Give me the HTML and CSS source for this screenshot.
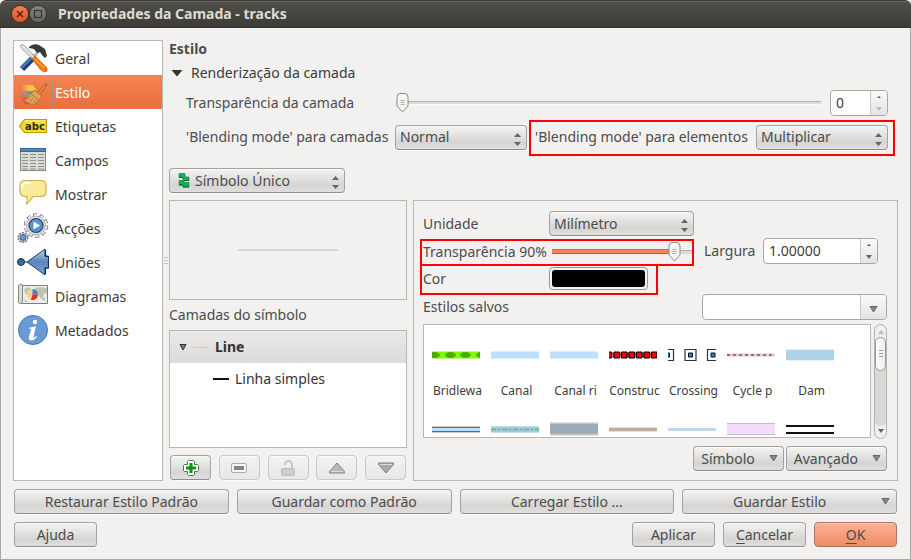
FILE: index.html
```html
<!DOCTYPE html>
<html lang="pt">
<head>
<meta charset="utf-8">
<title>Propriedades da Camada - tracks</title>
<link rel="stylesheet" href="styles.css">
</head>
<body>
<header class="titlebar">
  <button class="win close" aria-label="Fechar"><svg width="16" height="16" viewBox="0 0 16 16"><path d="M5 5l6 6M11 5l-6 6" stroke="#5a2312" stroke-width="1.500"/></svg></button>
  <button class="win max" aria-label="Maximizar"><svg width="16" height="16" viewBox="0 0 16 16"><rect x="4.500" y="4.500" width="7" height="7" fill="none" stroke="#34332e" stroke-width="1.200"/></svg></button>
  <h1>Propriedades da Camada - tracks</h1>
</header>
<main class="dialog">
  <div class="body">
    <nav class="sidebar">
      <a href="#geral"><svg class="ico" viewBox="0 0 32 32"><path d="M5 27L18 14" stroke="#1c3d70" stroke-width="6"/><path d="M4.500 26L14 16.500" stroke="#4479be" stroke-width="2.500"/><path d="M15 17l7-8" stroke="#b9bcbe" stroke-width="3"/><path d="M12 5c3-3 7-3.500 10-2l6 4 2 7-2 2-3-3-2-3-3 1-3-4-5-1z" fill="#34393b"/><path d="M3 4l2-2 4 3 10 11-2 2L6 8z" fill="#dfe1e2" stroke="#888c8e" stroke-width=".7"/><path d="M15 17l3-3 12 12v3l-3 1-4-3z" fill="#f57900" stroke="#c75a00" stroke-width=".7"/><path d="M18 17l9 9" stroke="#ffad4f" stroke-width="1.200"/></svg><span>Geral</span></a>
      <a href="#estilo" class="active"><svg class="ico" viewBox="0 0 32 32"><defs><linearGradient id="y"><stop offset="0" stop-color="#f6c745" stop-opacity="0"/><stop offset=".5" stop-color="#f6c745"/></linearGradient><linearGradient id="g"><stop offset="0" stop-color="#8e8fa5" stop-opacity=".1"/><stop offset=".5" stop-color="#8e8fa5"/></linearGradient><linearGradient id="r"><stop offset="0" stop-color="#f13b2e" stop-opacity="0"/><stop offset=".5" stop-color="#f13b2e"/></linearGradient></defs><path d="M4 9l12 0 4 6H6z" fill="url(#y)"/><path d="M3 15h13l4 6H5z" fill="url(#g)"/><path d="M2 20l12 2 6 6H8z" fill="url(#r)"/><path d="M20 17l8-9q2-1 2 1l-7 10z" fill="#e08a35" stroke="#a55b1b" stroke-width=".8"/><path d="M17 14l8 6-3 4-8-6z" fill="#e6a559" stroke="#a9641f" stroke-width=".8"/><path d="M13 17l9 7-4 4c-4 1-9-1-11-5 3 1 4-2 6-6z" fill="#dda15c" stroke="#b0702b" stroke-width=".7"/><path d="M13 20l-2 4M16 22l-3 4M19 24l-3 3" stroke="#ad742f" stroke-width=".7"/></svg><span>Estilo</span></a>
      <a href="#etiquetas"><svg class="ico" viewBox="0 0 32 32"><path d="M2.500 16L7.500 9.500h22v13h-22z" fill="#f4de2c" stroke="#b99c00" stroke-width="1.200"/><path d="M8 11h20" stroke="#fbf294"/><circle cx="6" cy="16" r="1" fill="#fff" stroke="#b99c00" stroke-width=".5"/><text class="tag" x="8" y="20">abc</text></svg><span>Etiquetas</span></a>
      <a href="#campos"><svg class="ico" viewBox="0 0 32 32"><rect x="3.500" y="4.500" width="25" height="22" fill="#d9ddd5" stroke="#888a85"/><rect x="3" y="4" width="26" height="4" fill="#3465a4"/><path d="M4 6h24" stroke="#7ca3d2"/><path d="M5 10.500h22M5 13.500h22M5 16.500h22M5 19.500h22M5 22.500h22M5 25h22" stroke="#8d918a" stroke-dasharray="6 2"/></svg><span>Campos</span></a>
      <a href="#mostrar"><svg class="ico" viewBox="0 0 32 32"><path d="M8 2.500h16q5 0 5 5v6q0 5-5 5h-8q-3 5-7 8 2-4 1-8-7 0-7-5v-6q0-5 5-5z" fill="#f8ec98" stroke="#cfb044" stroke-width="1.200"/><path d="M5 11V8q0-3 4-3h5" fill="none" stroke="#fff" stroke-width="1.800"/></svg><span>Mostrar</span></a>
      <a href="#accoes"><svg class="ico" viewBox="0 0 32 32"><circle cx="19" cy="13.500" r="10.500" fill="none" stroke="#77797a" stroke-width="3.500" stroke-dasharray="4 2.600"/><circle cx="19" cy="13.500" r="9.500" fill="#dedfdf" stroke="#8b8d8e" stroke-width=".7"/><circle cx="19" cy="13.500" r="10.400" fill="none" stroke="#e5e5e5" stroke-width="2.200" stroke-dasharray="3.200 3.400" stroke-dashoffset="-.4"/><circle cx="19" cy="13.500" r="7" fill="#5f90c9" stroke="#1e4376" stroke-width="1.200"/><path d="M16.500 9.500l6.500 4-6.500 4z" fill="#fff"/><circle cx="6" cy="25.500" r="4.800" fill="#dcdddd" stroke="#777" stroke-width="1.500" stroke-dasharray="2 1"/><circle cx="6" cy="25.500" r="2.900" fill="#6b98cf" stroke="#375d91"/></svg><span>Acções</span></a>
      <a href="#unioes"><svg class="ico" viewBox="0 0 32 32"><defs><linearGradient id="b" x2="0" y2="1"><stop offset="0" stop-color="#bfd1e5"/><stop offset=".5" stop-color="#5c85b9"/><stop offset="1" stop-color="#7aa3d5"/></linearGradient></defs><circle cx="4" cy="16" r="3.500" fill="#41699c" stroke="#14335e"/><path d="M7 16h4" stroke="#14335e"/><path d="M10 16L28 3v7h3.500v12H28v7z" fill="url(#b)" stroke="#183f75"/><path d="M28.500 4v6.500h3V22h-3v6" fill="none" stroke="#102d57" stroke-width="1.200"/></svg><span>Uniões</span></a>
      <a href="#diagramas"><svg class="ico" viewBox="0 0 32 32"><path d="M4.500 5.500h26v18h-26z" fill="#edeeea" stroke="#7c7e78"/><path d="M7 9l5-2 3 3-3 2-1 4-3-3zM18 8l5-1 7 1v5l-3 1-2 6-3-4-4-2zM7 19l4 3H8zM24 19l4-2v4z" fill="#bfc4b9"/><path d="M1.500 5.500q2-3 4-.5v16q-1 3-3 2.500l-1-1z" fill="#dadcd7" stroke="#83857f"/><circle cx="15.500" cy="14.500" r="5.500" fill="#f0d98a"/><path d="M15.500 14.500V9a5.500 5.500 0 0 1 5.500 5.500z" fill="#4c7fbd"/><path d="M15.500 14.500H21a5.500 5.500 0 0 1-7 5.300z" fill="#e33126"/></svg><span>Diagramas</span></a>
      <a href="#metadados"><svg class="ico" viewBox="0 0 32 32"><circle cx="16" cy="16" r="14.500" fill="#689bd3" stroke="#477ab3"/><circle cx="18" cy="8" r="2.200" fill="#fff"/><path d="M12 14q4-2 7-1.500l-2.500 10q0 2 3-.5l.5 1q-3 3.500-6 3.500-3-.5-2-4l2-7q0-1.500-2-.5z" fill="#fff"/></svg><span>Metadados</span></a>
    </nav>
    <div class="grip"><svg width="4" height="8" viewBox="0 0 4 8"><path d="M0 .5h4M0 3.500h4M0 6.500h4" stroke="#c6c4c0"/></svg></div>
    <section class="page">
      <h2>Estilo</h2>
      <button class="expander"><svg width="12" height="8" viewBox="0 0 12 8"><path d="M.5 1h11L6 7.500z" fill="#333"/></svg>Renderização da camada</button>
      <div class="row layer-alpha">
        <label for="la">Transparência da camada</label>
        <input class="slider" id="la" type="range" min="0" max="100" value="0">
        <div class="spin small"><input type="text" value="0" aria-label="Transparência"><div class="steps"><button aria-label="Mais"><svg viewBox="0 0 6 4"><path d="M1 3h4L3 1z" fill="#555"/></svg></button><button aria-label="Menos"><svg viewBox="0 0 6 4"><path d="M0 0h6L3 4z" fill="#bbb"/></svg></button></div></div>
      </div>
      <div class="row blend">
        <div class="field">
          <label for="b1">'Blending mode' para camadas</label>
          <div class="combo"><select id="b1"><option>Normal</option></select><svg class="ud" viewBox="0 0 7 13"><path d="M0 4h7L3.500 0zM0 9h7l-3.500 4z" fill="#666"/></svg></div>
        </div>
        <div class="field marked mark-blend">
          <label for="b2">'Blending mode' para elementos</label>
          <div class="combo"><select id="b2"><option>Multiplicar</option></select><svg class="ud" viewBox="0 0 7 13"><path d="M0 4h7L3.500 0zM0 9h7l-3.500 4z" fill="#666"/></svg></div>
        </div>
      </div>
      <div class="combo renderer">
        <svg class="lead" viewBox="0 0 12 15"><path d="M1 .5h6v3.500h4v3.500H6v2h5V14H5v-2H1V7.500h4v-3H1z" fill="#0fb457" stroke="#077a3a" stroke-width=".6"/><path d="M1 4.500h4M6 7.500h5M1 12h4M5 14h6" stroke="#075e30"/></svg>
        <select aria-label="Tipo de símbolo"><option>Símbolo Único</option></select><svg class="ud" viewBox="0 0 7 13"><path d="M0 4h7L3.500 0zM0 9h7l-3.500 4z" fill="#666"/></svg>
      </div>
      <div class="split">
        <div class="layers">
          <div class="preview"><i></i></div>
          <h3>Camadas do símbolo</h3>
          <div class="tree">
            <div class="node root"><svg width="8" height="7" viewBox="0 0 8 7"><path d="M1 .5h6L4 6z" fill="#777" stroke="#333"/></svg><i class="faint"></i><b>Line</b></div>
            <div class="node child"><i></i><span>Linha simples</span></div>
          </div>
          <div class="tools">
            <button aria-label="Adicionar"><svg viewBox="0 0 16 16"><path d="M5.500.5h5l1 1v3h3l1 1v5l-1 1h-3v3l-1 1h-5l-1-1v-3h-3l-1-1v-5l1-1h3v-3z" fill="#fff" stroke="#3d7f3c"/><path d="M6.500 3h3v3.500H13v3H9.500V13h-3V9.500H3v-3h3.500z" fill="#0b9510"/></svg></button>
            <button disabled aria-label="Remover"><svg viewBox="0 0 16 16"><rect x=".5" y="3.500" width="15" height="9" rx="1.500" fill="#f4f4f4" stroke="#aaa"/><rect x="3" y="6" width="10" height="4" fill="#858585"/></svg></button>
            <button disabled aria-label="Bloquear"><svg viewBox="0 0 16 16"><path d="M5 5V4.500a3.500 3.500 0 0 1 7 0V9" fill="none" stroke="#c6c6c6" stroke-width="2"/><rect x="1.500" y="8.500" width="13" height="7" rx="1" fill="#cdcdcd" stroke="#bcbcbc"/></svg></button>
            <button disabled aria-label="Subir"><svg viewBox="0 0 16 16"><path d="M8 3l7.500 8.500v1.500H.5v-1.500z" fill="#b8b8b8" stroke="#858585"/><path d="M2 11.500h12" stroke="#ddd"/></svg></button>
            <button disabled aria-label="Descer"><svg viewBox="0 0 16 16"><path d="M8 13l7.500-8.500V3H.5v1.500z" fill="#a8a8a8" stroke="#858585"/><path d="M2 4.500h12" stroke="#ddd"/></svg></button>
          </div>
        </div>
        <div class="symbol">
          <div class="props">
            <div class="left">
              <div class="prop unit"><label for="un">Unidade</label><div class="combo"><select id="un"><option>Milímetro</option></select><svg class="ud" viewBox="0 0 7 13"><path d="M0 4h7L3.500 0zM0 9h7l-3.500 4z" fill="#666"/></svg></div></div>
              <div class="prop marked mark-alpha"><label for="sa">Transparência 90%</label><input class="slider hot" id="sa" type="range" min="0" max="100" value="90"></div>
              <div class="prop marked mark-color"><label for="cor">Cor</label><input class="swatch" id="cor" type="color" value="#000000"></div>
            </div>
            <div class="width"><label for="lg">Largura</label>
              <div class="spin"><input id="lg" type="text" value="1.00000"><div class="steps"><button aria-label="Mais"><svg viewBox="0 0 6 4"><path d="M1 3h4L3 1z" fill="#555"/></svg></button><button aria-label="Menos"><svg viewBox="0 0 6 4"><path d="M0 0h6L3 4z" fill="#666"/></svg></button></div></div>
            </div>
          </div>
          <div class="saved"><label for="es">Estilos salvos</label><div class="editcombo"><input id="es" type="text"><button aria-label="Abrir lista"><svg class="dn" viewBox="0 0 9 7"><path d="M1 .5h7L4.500 6z" fill="#888" stroke="#666"/></svg></button></div></div>
          <div class="gallery">
            <ul>
              <li><svg viewBox="0 0 48 24"><path d="M0 12h48" stroke="#7dfc00" stroke-width="7"/><path d="M0 9.500h5l3 2.500-3 2.500H0zM13 12l3-2.500h5l3 2.500-3 2.500h-5zM28 12l3-2.500h5l3 2.500-3 2.500h-5zM44 12l3-2.500h1v5h-1z" fill="#4fa800" stroke="#4fa800" stroke-width=".6"/></svg><span>Bridlewa</span></li>
              <li><svg viewBox="0 0 48 24"><path d="M0 12h48" stroke="#bfdfff" stroke-width="7"/></svg><span>Canal</span></li>
              <li><svg viewBox="0 0 48 24"><path d="M0 12h48" stroke="#bfdfff" stroke-width="7"/></svg><span>Canal ri</span></li>
              <li><svg viewBox="0 0 48 24"><path d="M0 12h48" stroke="#777" stroke-width="5"/><g fill="red" stroke="#000"><path d="M-3 9h5.500v6H-3zM5 9h5.500v6H5zM12.500 9H18v6h-5.500zM20 9h5.500v6H20zM27.500 9H33v6h-5.500zM35 9h5.500v6H35zM42.500 9H48v6h-5.500z"/></g></svg><span>Construc</span></li>
              <li><svg viewBox="0 0 48 24"><g fill="#fff" stroke="#333" stroke-width="1.200"><path d="M-6 6.500H5.500v11H-6zM17 6.500h11v11H17zM39.500 6.500h11v11h-11z"/></g><g fill="#1d86ee" stroke="#111"><path d="M-1.500 10h3v4h-3zM20.500 10h4v4h-4zM43 10h4v4h-4z"/></g></svg><span>Crossing</span></li>
              <li><svg viewBox="0 0 48 24"><path d="M0 12h48" stroke="#dfccd8" stroke-width="3"/><path d="M0 12h48" stroke="#ab658a" stroke-width="2" stroke-dasharray="3 3"/></svg><span>Cycle p</span></li>
              <li><svg viewBox="0 0 48 24"><path d="M0 12h48" stroke="#e0f4f4" stroke-width="12"/><path d="M0 12h48" stroke="#acd3e6" stroke-width="10"/></svg><span>Dam</span></li>
              <li><svg viewBox="0 0 48 24"><path d="M0 12.500h48" stroke="#dccab8" stroke-width="7"/><path d="M0 12.500h48" stroke="#965b25" stroke-width="5"/><path d="M0 12.500h48" stroke="#bfdfff" stroke-width="3"/></svg></li>
              <li><svg viewBox="0 0 48 24"><path d="M0 12.500h48" stroke="#bfdff5" stroke-width="7"/><path d="M0 12.500h48" stroke="#9bccd2" stroke-width="5"/><path d="M0 12.500h48" stroke="#789b91" stroke-dasharray="5 2 2 2"/></svg></li>
              <li><svg viewBox="0 0 48 24"><path d="M0 12h48" stroke="#d3c4b8" stroke-width="13"/><path d="M0 12h48" stroke="#9eabbb" stroke-width="10"/></svg></li>
              <li><svg viewBox="0 0 48 24"><path d="M0 12.500h48" stroke="#e5ddd5" stroke-width="5"/><path d="M0 12.500h48" stroke="#bfae9f" stroke-width="3"/></svg></li>
              <li><svg viewBox="0 0 48 24"><path d="M0 12.500h48" stroke="#bbd8f0" stroke-width="3"/></svg></li>
              <li><svg viewBox="0 0 48 24"><path d="M0 12h48" stroke="#c6bccb" stroke-width="12"/><path d="M0 12h48" stroke="#f4dcff" stroke-width="10"/></svg></li>
              <li><svg viewBox="0 0 48 24"><path d="M0 12.500h48" stroke="#111" stroke-width="9"/><path d="M0 12.500h48" stroke="#fff" stroke-width="5"/></svg></li>
            </ul>
            <div class="scroll"><svg viewBox="0 0 6 4"><path d="M0 4h6L3 0z" fill="#bbb"/></svg><div class="track"><div class="thumb"><svg viewBox="0 0 6 8"><path d="M1 .5h4M1 3.500h4M1 6.500h4" stroke="#999"/></svg></div></div><svg viewBox="0 0 6 4"><path d="M0 0h6L3 4z" fill="#666"/></svg></div>
          </div>
          <div class="menus"><button class="btn menu">Símbolo<svg class="dn" viewBox="0 0 9 7"><path d="M1 .5h7L4.500 6z" fill="#888" stroke="#666"/></svg></button><button class="btn menu">Avançado<svg class="dn" viewBox="0 0 9 7"><path d="M1 .5h7L4.500 6z" fill="#888" stroke="#666"/></svg></button></div>
        </div>
      </div>
    </section>
  </div>
  <div class="styles-bar">
    <button class="btn">Restaurar Estilo Padrão</button>
    <button class="btn">Guardar como Padrão</button>
    <button class="btn">Carregar Estilo ...</button>
    <button class="btn wide-menu"><span>Guardar Estilo</span><svg class="dn" viewBox="0 0 9 7"><path d="M1 .5h7L4.500 6z" fill="#888" stroke="#666"/></svg></button>
  </div>
  <footer class="actions">
    <button class="btn help">Ajuda</button>
    <button class="btn">Aplicar</button>
    <button class="btn"><u>C</u>ancelar</button>
    <button class="btn ok"><u>O</u>K</button>
  </footer>
</main>
</body>
</html>
```
FILE: styles.css
```css
* { box-sizing: border-box; }
body {
  margin: 0;
  min-height: 100vh;
  display: flex;
  flex-direction: column;
  background: #f2f1f0;
  color: #4c4c4c;
  font: 14px/18px "Noto Sans", "Open Sans", sans-serif;
}
button, input, select { font: inherit; color: inherit; margin: 0; }
button { padding: 0; border: 0; background: none; }
h1, h2, h3, ul { margin: 0; padding: 0; font-size: inherit; }
svg { display: block; flex: none; }
label, span { white-space: nowrap; }

.titlebar {
  height: 28px;
  display: flex;
  align-items: center;
  gap: 2px;
  padding: 0 12px;
  border-radius: 6px 6px 0 0;
  background: linear-gradient(#504f49, #3c3b37);
  border-top: 1px solid #3a3936;
  border-bottom: 1px solid #33322e;
  box-shadow: inset 0 1px #66655f;
  color: #dfdbd2;
}
.titlebar h1 { margin-left: 10px; font-size: 14px; font-weight: 700; }
.win { width: 16px; height: 16px; border-radius: 50%; box-shadow: 0 0 0 1px #34332f; }
.close { background: linear-gradient(#f68055, #e4531f); }
.max { background: linear-gradient(#86857e, #65645d); }

.dialog {
  flex: 1;
  display: flex;
  flex-direction: column;
  border: 1px solid #aaa8a4;
  border-top: 0;
  padding: 12px;
}
.body { flex: 1; display: flex; }

.sidebar {
  width: 150px;
  flex: none;
  background: #fff;
  border: 1px solid #bab7b3;
  color: #3c3c3c;
}
.sidebar a {
  height: 34px;
  display: flex;
  align-items: stretch;
  color: inherit;
  text-decoration: none;
}
.ico { width: 32px; height: 32px; margin: 1px 3px; }
.sidebar span { flex: 1; display: flex; align-items: center; padding: 2px 0 0 3px; }
.sidebar .active { background: linear-gradient(#f58354, #e86f3e); color: #fff; }
.sidebar .active span { outline: 1px dotted #a99282; outline-offset: -1px; }
.tag { font: bold 10px "DejaVu Sans", sans-serif; fill: #2c2c22; }
.grip { width: 6px; display: flex; align-items: center; justify-content: center; }

.page { flex: 1; min-width: 0; display: flex; flex-direction: column; }
.page h2 { height: 18px; line-height: 18px; }
.expander {
  height: 22px;
  margin: 4px 0 6px;
  padding-left: 2px;
  display: flex;
  align-items: center;
  gap: 8px;
  color: #3c3c3c;
}
.row { display: flex; align-items: center; margin: 0 10px 8px 17px; height: 26px; }
.layer-alpha label { width: 210px; }
.layer-alpha .slider { flex: 1; margin-right: 9px; }
.blend { gap: 8px; margin-bottom: 18px; }
.field { display: flex; align-items: center; }
.field .combo { width: 132px; }
.field:first-child { flex: 0 0 341px; justify-content: space-between; }
.field:last-child { flex: 1; justify-content: space-between; }

.combo { position: relative; display: flex; }
select {
  appearance: none;
  width: 100%;
  height: 25px;
  padding: 0 20px 0 4px;
  outline: 0;
}
select, .btn, .tools button {
  border: 1px solid #a5a29e;
  border-bottom-color: #8f8d8a;
  border-radius: 4px;
  background: linear-gradient(#f4f4f3, #d6d5d4 70%, #e0dfde);
  box-shadow: inset 0 1px #fafafa, 0 1px #fafafa;
}
.ud { position: absolute; right: 6px; top: 8px; width: 7px; height: 13px; }
.renderer { width: 176px; margin-bottom: 7px; }
.renderer select { padding-left: 25px; }
.lead { position: absolute; left: 9px; top: 5px; width: 12px; height: 15px; }

.slider {
  appearance: none;
  height: 20px;
  min-width: 0;
  background: linear-gradient(#b5b2ae 0 1px, #dddbd9 1px 3px, #fafafa 3px) center / 100% 4px no-repeat;
}
.slider::-webkit-slider-thumb {
  appearance: none;
  width: 13px;
  height: 20px;
  background: url("data:image/svg+xml,%3Csvg xmlns='http://www.w3.org/2000/svg' width='13' height='20'%3E%3Cpath d='M4 .5h5q3 0 3 4V13l-5.500 6L1 13V4.500q0-4 3-4z' fill='%23f5f5f4' stroke='%238f8c88'/%3E%3Cpath d='M4.500 7.500h4M4.500 9.500h4M4.500 11.500h4' stroke='%23aaa'/%3E%3C/svg%3E") no-repeat;
}
.hot {
  background:
    linear-gradient(#d9653a 0 1px, #f58653 1px 4px, #d0562b 4px) left center / 88% 5px no-repeat,
    linear-gradient(#b5b2ae 0 1px, #dddbd9 1px 4px) center / 100% 4px no-repeat;
}

.spin, .editcombo {
  display: flex;
  height: 26px;
  border: 1px solid #aaa7a3;
  border-radius: 4px;
  background: #fff;
  overflow: hidden;
  color: #3c3c3c;
}
.spin input, .editcombo input { flex: 1; min-width: 0; width: 0; border: 0; padding: 0 5px; background: none; outline: 0; }
.spin { width: 115px; flex: none; }
.spin.small { width: 58px; }
.steps, .editcombo button { border-left: 1px solid #c9c7c4; background: linear-gradient(#fafafa, #e4e3e2); }
.steps { width: 17px; display: flex; flex-direction: column; }
.steps button { flex: 1; display: flex; align-items: center; justify-content: center; }
.steps svg { width: 6px; height: 4px; }
.editcombo { width: 185px; }
.editcombo button { width: 26px; display: flex; align-items: center; justify-content: center; padding-top: 4px; }
.dn { width: 9px; height: 7px; }

/* Red frames that call out the highlighted settings. */
.marked { position: relative; }
.marked::after {
  content: "";
  position: absolute;
  border: 2px solid #f00;
  pointer-events: none;
}
.mark-blend::after { inset: -5px -7px -6px -6px; }
.mark-alpha::after { inset: 1px 0 -1px -3px; }
.mark-color::after { inset: -1px 36px -3px -3px; }

.split { flex: 1; display: flex; gap: 6px; }
.layers { width: 238px; flex: none; display: flex; flex-direction: column; }
.preview { height: 100px; border: 1px solid #bab7b3; display: flex; align-items: center; justify-content: center; }
.preview i { width: 100px; height: 2px; background: #dad8d5; }
.layers h3 { font-weight: 400; height: 30px; line-height: 30px; }
.tree { flex: 1; background: #fff; border: 1px solid #bab7b3; color: #333; }
.node { height: 32px; display: flex; align-items: center; }
.root { background: linear-gradient(#ebeae9, #dcdbda); padding-left: 9px; }
.node i { width: 16px; height: 2px; background: #111; margin: 0 6px; }
.node .faint { height: 1px; background: #cfc9c1; }
.child { padding-left: 37px; }
.tools { display: flex; justify-content: space-between; margin: 7px 0 1px; padding: 0 1px; }
.tools button { width: 41px; height: 25px; display: flex; align-items: center; justify-content: center; }
.tools button:disabled { border-color: #cac8c5; background: linear-gradient(#f3f3f2, #e8e7e6); }
.tools svg { width: 16px; height: 16px; }

.symbol { flex: 1; min-width: 0; border: 1px solid #bab7b3; padding: 8px 10px 9px 9px; display: flex; flex-direction: column; }
.props { display: flex; align-items: center; gap: 10px; }
.left { width: 271px; flex: none; }
.prop { display: flex; align-items: center; justify-content: space-between; height: 27px; }
.prop.unit { height: 29px; }
.unit .combo { width: 145px; }
.prop .slider { width: 142px; }
.swatch {
  appearance: none;
  width: 99px;
  height: 23px;
  margin-right: 46px;
  padding: 2px;
  border: 1px solid #999691;
  border-radius: 4px;
  background: #f5f4f3;
}
.swatch::-webkit-color-swatch-wrapper { padding: 0; }
.swatch::-webkit-color-swatch { border: 0; border-radius: 3px; }
.width { flex: 1; display: flex; align-items: center; justify-content: space-between; margin-right: 9px; }
.saved { display: flex; align-items: center; justify-content: space-between; height: 26px; margin: 2px 0 4px; }
.gallery { flex: 1; display: flex; gap: 3px; }
.gallery ul {
  flex: 1;
  height: 114px;
  overflow: hidden;
  list-style: none;
  padding: 18px 8px 0;
  background: #fff;
  border: 1px solid #bab7b3;
  display: grid;
  grid-template-columns: repeat(auto-fill, 51px);
  grid-auto-rows: 74px;
  column-gap: 8px;
  color: #3c3c3c;
  font-size: 12px;
}
.gallery li { overflow: hidden; }
.gallery li svg { width: 48px; height: 24px; }
.gallery li span { display: block; margin-top: 15px; text-align: center; }
.scroll {
  width: 13px;
  display: flex;
  flex-direction: column;
  align-items: center;
  justify-content: space-between;
  padding-top: 5px;
  padding-bottom: 5px;
  border: 1px solid #b5b2ae;
  border-radius: 7px;
  background: #efeeed;
}
.scroll svg { width: 6px; height: 4px; }
.track { flex: 1; width: 11px; margin: 3px 0; background: #dad8d6; border-radius: 6px; }
.thumb { height: 34px; border: 1px solid #9d9a96; border-radius: 6px; background: linear-gradient(90deg, #fff, #ececeb); display: flex; align-items: center; justify-content: center; }
.thumb svg { height: 8px; }
.menus { display: flex; justify-content: flex-end; gap: 2px; margin-top: 7px; }

.btn { height: 25px; min-width: 83px; text-align: center; }
.menu { padding: 0 5px 0 7px; display: flex; align-items: center; justify-content: space-between; gap: 14px; }
.styles-bar { display: grid; grid-template-columns: repeat(4, 1fr); gap: 8px; margin-top: 8px; padding: 0 1px; }
.wide-menu { display: flex; align-items: center; padding-right: 6px; }
.wide-menu span { flex: 1; padding-right: 5px; }
.actions { display: flex; gap: 8px; margin-top: 8px; padding: 0 1px; }
.help { margin-right: auto; }
.ok { background: linear-gradient(#fbb296, #ee8b66); border-color: #ad7560; box-shadow: inset 0 1px #fcc4ae; }
u { text-underline-offset: 3px; }
```
